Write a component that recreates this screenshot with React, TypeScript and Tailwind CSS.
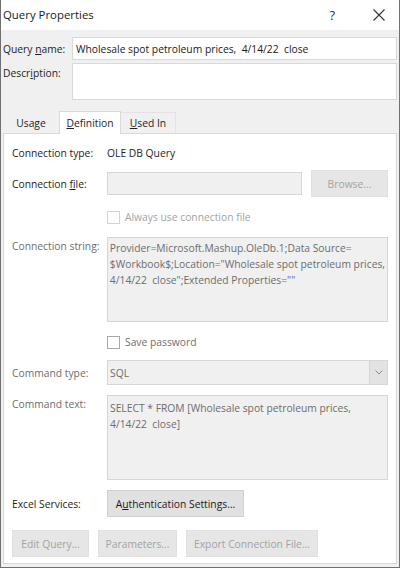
import React from 'react';

const font = { fontFamily: '"Open Sans", "Noto Sans", sans-serif' };

function Checkbox({ label, faded }: { label: string; faded?: boolean }) {
    return (
        <div className="flex items-center h-[20px] pl-[95px]">
            <div className={`w-[13px] h-[13px] border bg-white ${faded ? 'border-[#d3d3d3]' : 'border-[#a8a8a8]'}`} />
            <span className={`ml-[5px] ${faded ? 'text-[#a3a3a3]' : 'text-[#6d6d6d]'}`}>{label}</span>
        </div>
    );
}

function DisabledButton({ children, width }: { children: React.ReactNode; width: string }) {
    return (
        <div className={`${width} h-[27px] flex items-center justify-center bg-[#e6e6e6] border border-[#e0e0e0] text-[#a3a3a3]`}>
            {children}
        </div>
    );
}

export default function App() {
    return (
        <div
            style={font}
            className="w-[400px] h-[568px] flex flex-col bg-[#f0f0f0] border-x border-b border-[#707070] text-[10.3px] text-[#1e1e1e] leading-[16px] whitespace-nowrap"
        >
            {/* Title bar */}
            <div className="h-[30px] bg-white flex items-center pl-[2px] shrink-0">
                <span className="text-[11.4px] text-[#1a1a1a]">Query Properties</span>
                <span className="ml-auto text-[13px] text-[#333] mr-[38px]">?</span>
                <svg width="12" height="12" viewBox="0 0 12 12" className="mr-[14px]">
                    <path d="M0.5 0.5 L11.5 11.5 M11.5 0.5 L0.5 11.5" stroke="#333" strokeWidth="1.1" fill="none" />
                </svg>
            </div>

            {/* Name / description */}
            <div className="flex items-center mt-[7px] pl-[2px] pr-[2px]">
                <div className="w-[69px]">
                    Query <span className="underline">n</span>ame:
                </div>
                <div className="flex-1 h-[23px] bg-white border border-[#d9d9d9] flex items-center pl-[3px] text-[#1a1a1a]">
                    Wholesale spot petroleum prices,&nbsp; 4/14/22&nbsp; close
                </div>
            </div>
            <div className="flex mt-[3px] pl-[2px] pr-[2px]">
                <div className="w-[69px] pt-[2px]">
                    Descr<span className="underline">i</span>ption:
                </div>
                <div className="flex-1 h-[37px] bg-white border border-[#d9d9d9]" />
            </div>

            {/* Tabs */}
            <div className="flex items-end mt-[10px] pl-[2px] h-[23px] shrink-0">
                <div className="w-[56px] h-[21px] flex items-center justify-center">Usage</div>
                <div className="w-[62px] h-[23px] bg-white border-x border-t border-[#d9d9d9] flex items-center justify-center relative top-[1px]">
                    <span className="underline">D</span>efinition
                </div>
                <div className="w-[55px] h-[21px] border-r border-t border-[#e3e3e3] flex items-center justify-center">
                    <span className="underline">U</span>sed In
                </div>
            </div>

            {/* Panel */}
            <div className="flex-1 mx-[2px] mb-[3px] bg-white border border-[#d9d9d9] pl-[8px] pr-[8px] pt-[9px] flex flex-col">
                <div className="flex items-center h-[20px]">
                    <div className="w-[95px]">Connection type:</div>
                    <div>OLE DB Query</div>
                </div>

                <div className="flex items-center h-[27px] mt-[7px]">
                    <div className="w-[95px]">
                        Connection <span className="underline">f</span>ile:
                    </div>
                    <div className="w-[195px] h-[23px] bg-[#f0f0f0] border border-[#d6d6d6]" />
                    <DisabledButton width="ml-auto w-[77px]">Browse...</DisabledButton>
                </div>

                <div className="mt-[10px]">
                    <Checkbox label="Always use connection file" faded />
                </div>

                <div className="flex mt-[10px]">
                    <div className="w-[95px] pt-[1px] text-[#6d6d6d]">Connection string:</div>
                    <div className="flex-1 h-[85px] bg-[#f0f0f0] border border-[#d6d6d6] px-[2px] pt-[2px] text-[#6d6d6d]">
                        Provider=Microsoft.Mashup.OleDb.1;Data Source=
                        <br />
                        $Workbook$;Location="Wholesale spot petroleum prices,
                        <br />
                        4/14/22&nbsp; close";Extended Properties=""
                    </div>
                </div>

                <div className="mt-[10px]">
                    <Checkbox label="Save password" />
                </div>

                <div className="flex items-center mt-[8px]">
                    <div className="w-[95px] text-[#6d6d6d]">Command type:</div>
                    <div className="flex-1 h-[25px] bg-[#f0f0f0] border border-[#d6d6d6] flex items-center pl-[2px] text-[#6d6d6d]">
                        <span>SQL</span>
                        <div className="ml-auto w-[18px] h-[23px] bg-[#e3e3e3] border-l border-[#d6d6d6] flex items-center justify-center">
                            <svg width="8" height="5" viewBox="0 0 8 5">
                                <path d="M0.5 0.5 L4 4 L7.5 0.5" stroke="#8a8a8a" strokeWidth="1" fill="none" />
                            </svg>
                        </div>
                    </div>
                </div>

                <div className="flex mt-[10px]">
                    <div className="w-[95px] pt-[1px] text-[#6d6d6d]">Command text:</div>
                    <div className="flex-1 h-[85px] bg-[#f0f0f0] border border-[#d6d6d6] px-[2px] pt-[4px] text-[#6d6d6d]">
                        SELECT * FROM [Wholesale spot petroleum prices,
                        <br />
                        4/14/22&nbsp; close]
                    </div>
                </div>

                <div className="flex items-center mt-[10px]">
                    <div className="w-[95px]">Excel Services:</div>
                    <div className="w-[137px] h-[27px] bg-[#e1e1e1] border border-[#d0d0d0] flex items-center justify-center text-[#1a1a1a]">
                        A<span className="underline">u</span>thentication Settings...
                    </div>
                </div>

                <div className="flex mt-[13px] gap-[9px]">
                    <DisabledButton width="w-[77px]">Edit Query...</DisabledButton>
                    <DisabledButton width="w-[79px]">Parameters...</DisabledButton>
                    <DisabledButton width="w-[132px]">Export Connection File...</DisabledButton>
                </div>
            </div>
        </div>
    );
}
